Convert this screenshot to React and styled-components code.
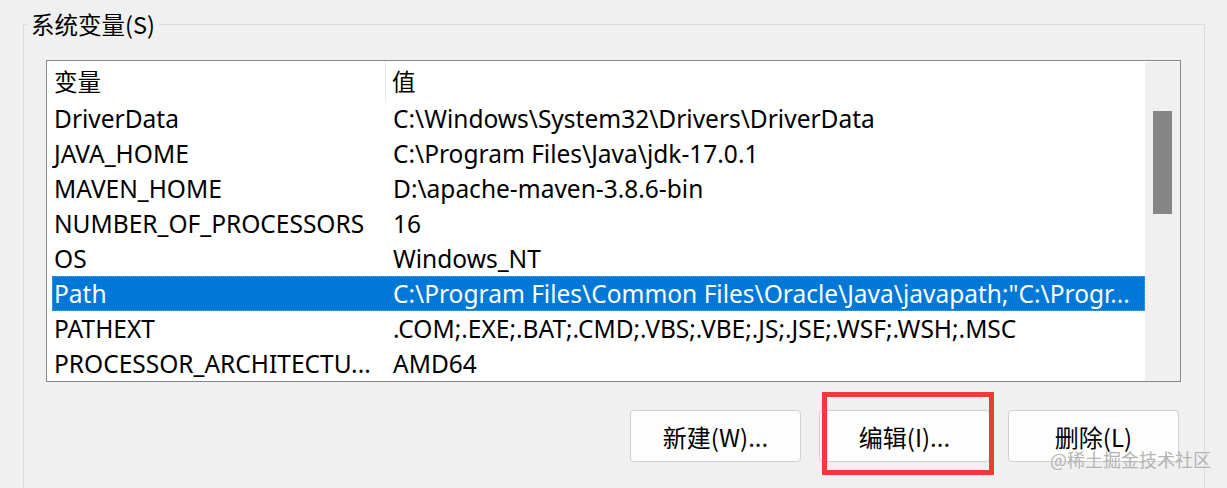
import styled, { createGlobalStyle } from "styled-components";

const GlobalStyle = createGlobalStyle`
  html, body {
    margin: 0;
    background: #f0f0f0;
  }
  body {
    font-family: "Noto Sans", "Noto Sans CJK SC", sans-serif;
    color: #000;
  }
`;

const Page = styled.div`
  position: relative;
  width: 1227px;
  height: 488px;
  overflow: hidden;
  padding-left: 23px;
  box-sizing: border-box;
`;

const Group = styled.fieldset`
  margin: 11px 0 0 0;
  padding: 0;
  width: 1182px;
  height: 620px;
  box-sizing: border-box;
  border: 1px solid #dcdcdc;
  min-width: 0;
`;

const Legend = styled.legend`
  margin-left: 3px;
  padding: 0 4px;
  font-size: 23.5px;
  line-height: 26px;
  font-family: "Noto Sans CJK SC", "Noto Sans", sans-serif;
`;

const Content = styled.div`
  padding: 23px 23px 0 22px;
`;

const ListBox = styled.div`
  display: grid;
  grid-template-columns: 1fr 35px;
  width: 1135px;
  height: 322px;
  box-sizing: border-box;
  border: 1px solid #828790;
  background: #fff;
`;

const Table = styled.div`
  display: flex;
  flex-direction: column;
  overflow: hidden;
`;

const Header = styled.div`
  display: grid;
  grid-template-columns: 339px 1fr;
  height: 40px;
  font-size: 23.5px;
  font-family: "Noto Sans CJK SC", "Noto Sans", sans-serif;
`;

const HeadCell = styled.div`
  display: flex;
  align-items: center;
  padding-left: ${(p) => p.$pad}px;
  border-right: ${(p) => (p.$divider ? "1px solid #e5e5e5" : "none")};
`;

const Row = styled.div`
  display: grid;
  grid-template-columns: 334px 1fr;
  height: 35px;
  margin-left: 5px;
  box-sizing: border-box;
  align-items: center;
  font-size: 24.5px;
  line-height: 35px;
  white-space: nowrap;
  background: ${(p) => (p.$selected ? "#0078d7" : "transparent")};
  color: ${(p) => (p.$selected ? "#fff" : "#000")};
  outline: ${(p) => (p.$selected ? "1px dotted #5a9fe0" : "none")};
  outline-offset: -1px;
`;

const Cell = styled.div`
  padding-left: ${(p) => p.$pad}px;
  overflow: hidden;
`;

const ScrollTrack = styled.div`
  background: #f0f0f0;
  margin-top: 1px;
  padding: 49px 0 0 8px;
`;

const Thumb = styled.div`
  width: 19px;
  height: 103px;
  background: #868686;
`;

const ButtonRow = styled.div`
  display: flex;
  justify-content: flex-end;
  gap: 18px;
  width: 1135px;
  padding: 28px 2px 0 0;
  box-sizing: border-box;
`;

const ButtonWrap = styled.div`
  position: relative;
`;

const Button = styled.button`
  width: 171px;
  height: 52px;
  background: #fdfdfd;
  border: 1px solid #d0d0d0;
  border-radius: 4px;
  font-size: 24px;
  font-family: "Noto Sans CJK SC", "Noto Sans", sans-serif;
  color: #000;
  padding: 0;
`;

const Highlight = styled.div`
  position: absolute;
  left: 3px;
  top: -18px;
  width: 172px;
  height: 83px;
  box-sizing: border-box;
  border: 5px solid #ef3b3b;
  pointer-events: none;
`;

const Watermark = styled.div`
  position: absolute;
  right: 16px;
  bottom: 16px;
  font-size: 18px;
  color: #b4b4b4;
  font-family: "Noto Sans CJK SC", "Noto Sans", sans-serif;
`;

const rows = [
  ["DriverData", "C:\\Windows\\System32\\Drivers\\DriverData"],
  ["JAVA_HOME", "C:\\Program Files\\Java\\jdk-17.0.1"],
  ["MAVEN_HOME", "D:\\apache-maven-3.8.6-bin"],
  ["NUMBER_OF_PROCESSORS", "16"],
  ["OS", "Windows_NT"],
  ["Path", 'C:\\Program Files\\Common Files\\Oracle\\Java\\javapath;"C:\\Progr...'],
  ["PATHEXT", ".COM;.EXE;.BAT;.CMD;.VBS;.VBE;.JS;.JSE;.WSF;.WSH;.MSC"],
  ["PROCESSOR_ARCHITECTU...", "AMD64"],
];

export default function App() {
  return (
    <Page>
      <GlobalStyle />
      <Group>
        <Legend>系统变量(S)</Legend>
        <Content>
          <ListBox>
            <Table>
              <Header>
                <HeadCell $pad={7} $divider>变量</HeadCell>
                <HeadCell $pad={6}>值</HeadCell>
              </Header>
              {rows.map(([name, value]) => (
                <Row key={name} $selected={name === "Path"}>
                  <Cell $pad={2}>{name}</Cell>
                  <Cell $pad={7}>{value}</Cell>
                </Row>
              ))}
            </Table>
            <ScrollTrack>
              <Thumb />
            </ScrollTrack>
          </ListBox>
          <ButtonRow>
            <ButtonWrap>
              <Button>新建(W)...</Button>
            </ButtonWrap>
            <ButtonWrap>
              <Button>编辑(I)...</Button>
              <Highlight />
            </ButtonWrap>
            <ButtonWrap>
              <Button>删除(L)</Button>
            </ButtonWrap>
          </ButtonRow>
        </Content>
      </Group>
      <Watermark>@稀土掘金技术社区</Watermark>
    </Page>
  );
}
